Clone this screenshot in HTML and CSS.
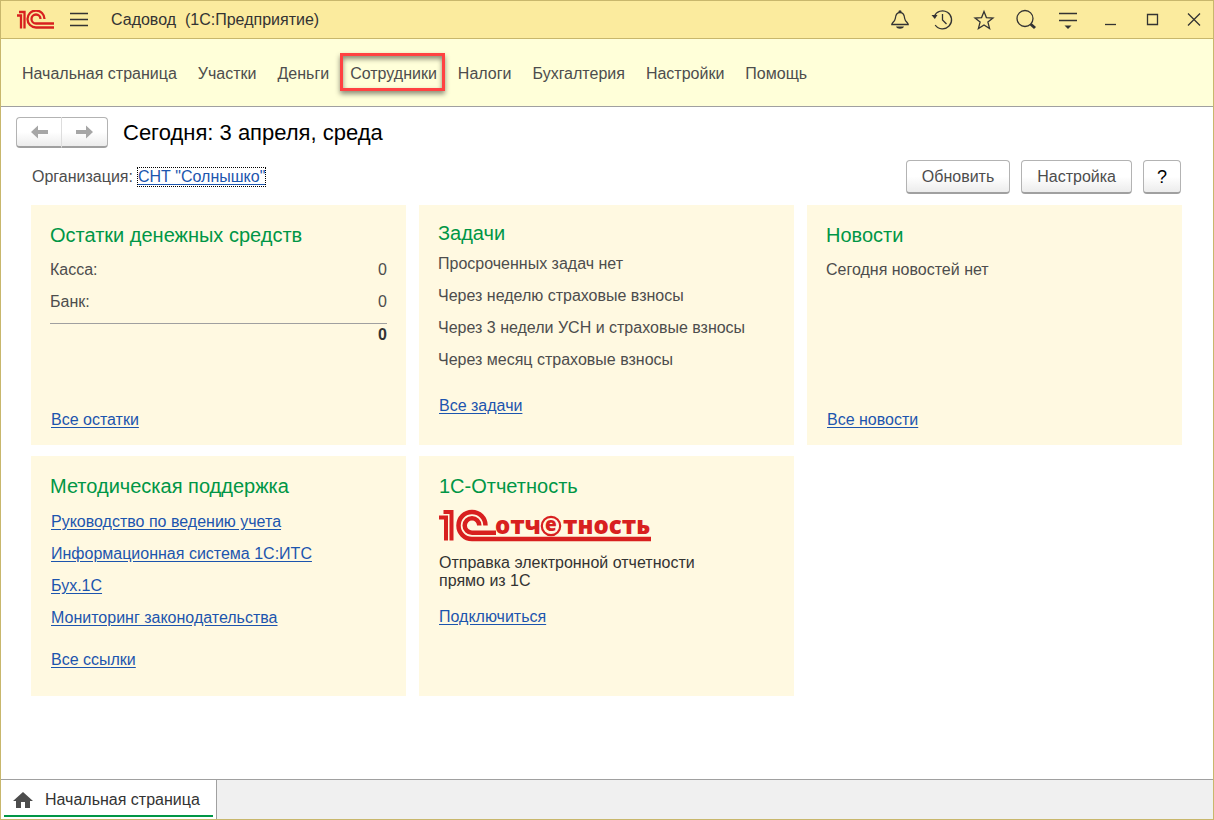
FILE: index.html
```html
<!DOCTYPE html>
<html lang="ru">
<head>
<meta charset="utf-8">
<title>Садовод (1С:Предприятие)</title>
<link rel="stylesheet" href="styles.css">
</head>
<body>
<div class="window">
  <header class="titlebar">
    <svg class="logo" viewBox="0 0 38 20" aria-label="1С" role="img">
      <g fill="none" stroke="#d8201f" stroke-width="2.300">
        <path d="M0 5.500h4V18.500M2 2h5.500v16.500"/>
        <path d="M27.500 9a8.500 8.500 0 1 0-8.500 8.500H37"/>
        <path d="M23.500 9a4.500 4.500 0 1 0-4.500 4.500H37"/>
      </g>
    </svg>
    <button class="icon-button menu-button" aria-label="Меню">
      <svg class="icon" viewBox="0 0 20 20"><path d="M1 3.500h18M1 9.500h18M1 15.500h18"/></svg>
    </button>
    <span class="app-title">Садовод&nbsp; (1С:Предприятие)</span>
    <div class="tools">
      <button class="icon-button" aria-label="Уведомления"><svg class="icon" viewBox="0 0 20 20"><path d="M1.800 14.500h16.400c0-2-3-2.500-3.500-6C14.400 5 13.500 2.500 10 2.500S5.600 5 5.300 8.500c-.5 3.500-3.500 4-3.500 6Z"/><path class="solid" d="M8.300 2.500a1.700 2.200 0 0 1 3.400 0ZM6 16.500h8c-1 3-7 3-8 0Z"/></svg></button>
      <button class="icon-button" aria-label="История"><svg class="icon" viewBox="0 0 20 20"><path d="M2.200 6.500a9 9 0 1 1 1 8.500M10.500 4v6l4 4"/><path class="solid" d="M-.5 5h6L2.800 9Z"/></svg></button>
      <button class="icon-button" aria-label="Избранное"><svg class="icon" viewBox="0 0 20 20"><path d="m10 1.500 2.400 6.100 6.600.4-5.100 4.100 1.700 6.500-5.600-3.600-5.600 3.600 1.700-6.500L1 8l6.600-.4Z"/></svg></button>
      <button class="icon-button" aria-label="Поиск"><svg class="icon" viewBox="0 0 20 20"><circle cx="9" cy="8.500" r="8"/><path class="thick" d="m14.500 14 4.500 4"/></svg></button>
      <button class="icon-button" aria-label="Настройки окна"><svg class="icon" viewBox="0 0 20 20"><path d="M1 3.500h18M1 10.500h18"/><path class="solid" d="M6.500 15.500h7L10 19Z"/></svg></button>
      <button class="icon-button" aria-label="Свернуть"><svg class="icon" viewBox="0 0 20 20"><path d="M5 14.500h11"/></svg></button>
      <button class="icon-button" aria-label="Развернуть"><svg class="icon" viewBox="0 0 20 20"><path d="M5.500 4.500h10v10h-10Z"/></svg></button>
      <button class="icon-button" aria-label="Закрыть"><svg class="icon" viewBox="0 0 20 20"><path d="m4 3.500 12 12M16 3.500l-12 12"/></svg></button>
    </div>
  </header>

  <nav class="sections">
    <a href="#">Начальная страница</a>
    <a href="#">Участки</a>
    <a href="#">Деньги</a>
    <a href="#" class="marked">Сотрудники</a>
    <a href="#">Налоги</a>
    <a href="#">Бухгалтерия</a>
    <a href="#">Настройки</a>
    <a href="#">Помощь</a>
  </nav>

  <main class="page">
    <div class="heading">
      <div class="history">
        <button class="button" aria-label="Назад"><svg class="arrow" viewBox="0 0 18 14"><path d="M1 7l7-6.500V5h10v4H8v4.500Z"/></svg></button>
        <button class="button" aria-label="Вперед"><svg class="arrow" viewBox="0 0 18 14"><path d="M17 7l-7-6.500V5H0v4h10v4.500Z"/></svg></button>
      </div>
      <h1>Сегодня: 3 апреля, среда</h1>
    </div>

    <div class="toolbar">
      <span>Организация:</span>
      <a href="#" class="organization">СНТ "Солнышко"</a>
      <div class="commands">
        <button class="button">Обновить</button>
        <button class="button">Настройка</button>
        <button class="button help">?</button>
      </div>
    </div>

    <div class="cards">
      <section class="card">
        <h2>Остатки денежных средств</h2>
        <table class="balances">
          <tbody>
            <tr><th scope="row">Касса:</th><td>0</td></tr>
            <tr><th scope="row">Банк:</th><td>0</td></tr>
          </tbody>
        </table>
        <div class="total">0</div>
        <a href="#" class="more">Все остатки</a>
      </section>

      <section class="card tasks">
        <h2>Задачи</h2>
        <ul class="list">
          <li>Просроченных задач нет</li>
          <li>Через неделю страховые взносы</li>
          <li>Через 3 недели УСН и страховые взносы</li>
          <li>Через месяц страховые взносы</li>
        </ul>
        <a href="#" class="more">Все задачи</a>
      </section>

      <section class="card">
        <h2>Новости</h2>
        <ul class="list">
          <li>Сегодня новостей нет</li>
        </ul>
        <a href="#" class="more">Все новости</a>
      </section>

      <section class="card support">
        <h2>Методическая поддержка</h2>
        <ul class="list">
          <li><a href="#">Руководство по ведению учета</a></li>
          <li><a href="#">Информационная система 1С:ИТС</a></li>
          <li><a href="#">Бух.1С</a></li>
          <li><a href="#">Мониторинг законодательства</a></li>
        </ul>
        <a href="#" class="more">Все ссылки</a>
      </section>

      <section class="card reporting">
        <h2>1С-Отчетность</h2>
        <svg class="report-logo" viewBox="0 0 212 34">
          <g fill="none" stroke="#d8201f" stroke-width="4.500">
            <path d="M0 8.500h7v23M4.500 3h8v28.500" stroke-width="4"/>
            <path d="M46.500 16.500A13.500 13.500 0 1 0 33 30H212"/>
            <path d="M40.300 16.500A7.300 7.300 0 1 0 33 23.800H57"/>
            <circle cx="112" cy="17" r="9.200" stroke-width="2.200"/>
          </g>
          <g class="wordmark">
            <text x="56" y="25">отч</text>
            <text x="106" y="22" class="letter">е</text>
            <text x="124" y="25">тность</text>
          </g>
        </svg>
        <p>Отправка электронной отчетности<br>прямо из 1С</p>
        <a href="#" class="more">Подключиться</a>
      </section>
    </div>
  </main>

  <footer class="taskbar">
    <button class="tab">
      <svg class="home" viewBox="0 0 20 16"><path d="M10 0 0 9h3v7h5v-6h4v6h5V9h3Z"/></svg>
      Начальная страница
    </button>
  </footer>
</div>
</body>
</html>
```

FILE: styles.css
```css
* {
  box-sizing: border-box;
}

body {
  margin: 0;
  font: 16px/18px "Liberation Sans", Arial, sans-serif;
  color: #4d4d4d;
}

button {
  font: inherit;
  color: inherit;
}

a {
  color: #1c55ae;
  text-underline-offset: 2px;
}

h1,
h2,
p,
ul {
  margin: 0;
  padding: 0;
}

.window {
  display: flex;
  flex-direction: column;
  min-height: 100vh;
  border: 1px solid #c8b76c;
  background: #fff;
}

.titlebar {
  display: flex;
  align-items: center;
  height: 38px;
  padding: 0 9px 0 16px;
  border-bottom: 1px solid #c8b76c;
  background: #fbeb9e;
  color: #333;
}

.logo {
  width: 38px;
  height: 20px;
}

.icon-button {
  display: flex;
  padding: 0;
  border: 0;
  background: none;
}

.menu-button {
  margin: 0 22px 0 14px;
}

.icon {
  width: 20px;
  height: 20px;
  overflow: visible;
  fill: none;
  stroke: #333;
  stroke-width: 1.3;
}

.icon .solid {
  fill: #333;
  stroke: none;
}

.icon .thick {
  stroke-width: 3;
}

.tools {
  display: flex;
  gap: 22px;
  margin-left: auto;
}

.sections {
  display: flex;
  align-items: center;
  gap: 21px;
  height: 68px;
  padding: 2px 21px 0;
  border-bottom: 1px solid #a0a0a0;
  background: #ffffd9;
}

.sections a {
  position: relative;
  color: #4d4d4d;
  text-decoration: none;
}

.sections .marked::after {
  content: "";
  position: absolute;
  inset: -12px -8px -8px -10px;
  border: 3px solid #ff4242;
  box-shadow: 0 3px 5px rgba(0, 0, 0, 0.45), inset 0 3px 5px rgba(0, 0, 0, 0.45);
}

.page {
  flex: 1;
  padding: 10px 31px 20px 30px;
}

.heading {
  display: flex;
  align-items: center;
  gap: 15px;
  margin-left: -15px;
}

.button {
  height: 34px;
  padding: 0 15px;
  border: 1px solid #b3b3b3;
  border-bottom: 2px solid #a0a0a0;
  border-radius: 4px;
  background: linear-gradient(#fff 50%, #ececec);
}

.history {
  display: flex;
}

.history .button {
  display: flex;
  align-items: center;
  justify-content: center;
  width: 46px;
  height: 31px;
  padding: 0;
}

.history .button:first-child {
  border-right-color: #ddd;
  border-radius: 4px 0 0 4px;
}

.history .button:last-child {
  border-left: 0;
  border-radius: 0 4px 4px 0;
}

.arrow {
  width: 18px;
  height: 14px;
  fill: #a6a6a6;
}

h1 {
  font-size: 22px;
  line-height: 28px;
  font-weight: normal;
  color: #000;
}

.toolbar {
  display: flex;
  align-items: center;
  gap: 5px;
  margin: 12px 1px 0;
}

.organization {
  outline: 1px dotted #000;
}

.commands {
  display: flex;
  gap: 11px;
  margin-left: auto;
}

.commands .help {
  width: 38px;
  padding: 0;
  color: #000;
  font-size: 18px;
}

.cards {
  display: grid;
  grid-template-columns: repeat(3, 1fr);
  gap: 11px 13px;
  margin-top: 11px;
}

.card {
  display: flex;
  flex-direction: column;
  align-items: flex-start;
  min-height: 240px;
  padding: 18px 19px 9px;
  background: #fff9e1;
}

h2 {
  margin-bottom: 7px;
  font-size: 20px;
  line-height: 24px;
  font-weight: normal;
  color: #009646;
}

.list {
  list-style: none;
  line-height: 32px;
}

.more {
  margin-top: auto;
  margin-left: 1px;
  line-height: 32px;
}

.balances {
  width: 100%;
  border-spacing: 0;
  line-height: 32px;
}

.balances th {
  padding: 0;
  font-weight: normal;
  text-align: left;
}

.balances td {
  padding: 0;
  text-align: right;
}

.total {
  align-self: stretch;
  margin-top: 5px;
  padding-top: 2px;
  border-top: 1px solid #a0a0a0;
  font-weight: bold;
  text-align: right;
  color: #333;
}

.tasks {
  padding-top: 16px;
}

.tasks h2 {
  margin-bottom: 3px;
}

.tasks .more {
  margin-top: 14px;
}

.support h2 {
  margin-bottom: 8px;
}

.support .list {
  padding-left: 1px;
}

.support .more {
  margin-top: 10px;
}

.reporting {
  padding-left: 20px;
}

.reporting h2 {
  margin-bottom: 11px;
}

.reporting p {
  margin-top: 11px;
  color: #333;
}

.reporting .more {
  margin: 11px 0 0;
}

.report-logo {
  width: 212px;
  height: 34px;
  overflow: visible;
}

.wordmark {
  font: 800 24px "Open Sans", sans-serif;
  fill: #d8201f;
}

.wordmark .letter {
  font-size: 19px;
}

.taskbar {
  display: flex;
  height: 40px;
  border-top: 1px solid #a0a0a0;
  background: #f0f0f0;
}

.tab {
  position: relative;
  display: flex;
  align-items: center;
  gap: 12px;
  padding: 0 16px 0 12px;
  border: 0;
  border-right: 1px solid #a0a0a0;
  background: #fff;
  color: #333;
}

.tab::after {
  content: "";
  position: absolute;
  inset: auto 3px 2px;
  height: 2px;
  background: #009646;
}

.home {
  width: 20px;
  height: 16px;
  fill: #4d4d4d;
}
```
